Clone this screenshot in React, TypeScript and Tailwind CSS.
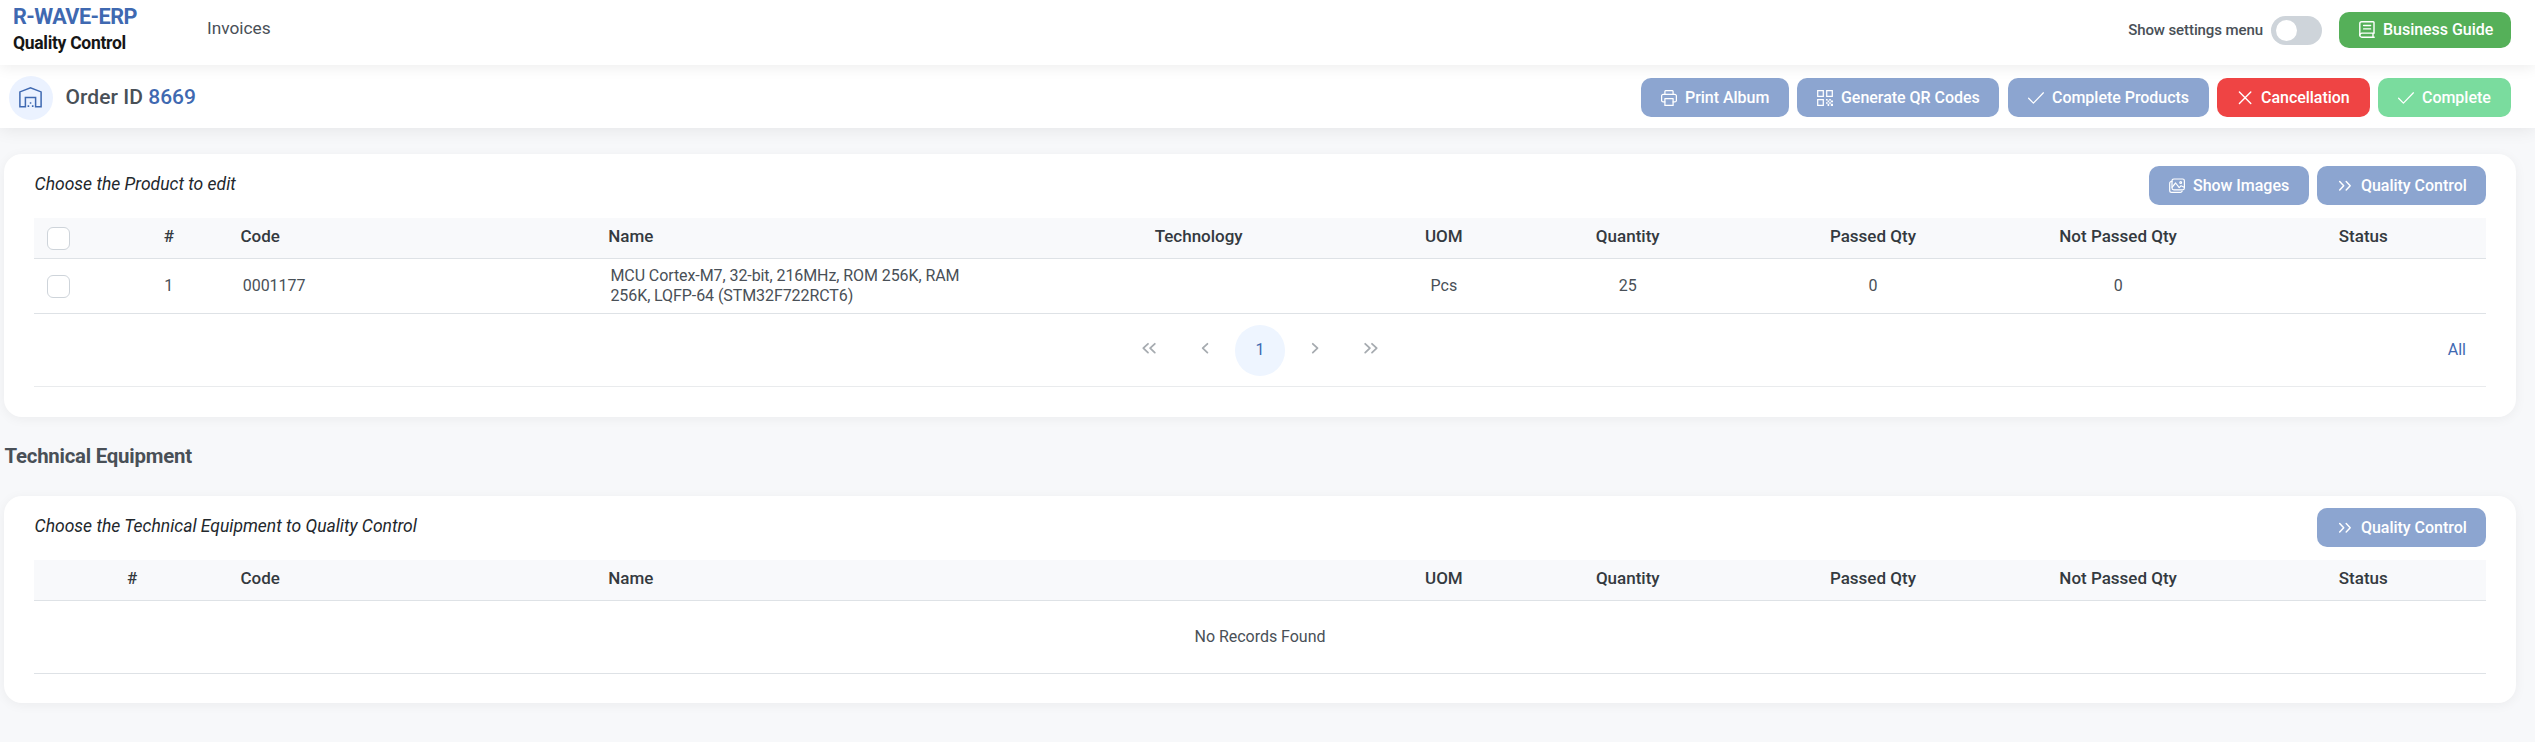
import type { ReactNode } from "react";

const iconProps = {
  width: 16,
  height: 16,
  viewBox: "0 0 16 16",
  fill: "none",
  stroke: "currentColor",
  strokeWidth: 1.25,
  strokeLinecap: "round" as const,
  strokeLinejoin: "round" as const,
  className: "shrink-0",
};

const PrintIcon = () => (
  <svg {...iconProps}>
    <path d="M3.9 4.4V1.6a1 1 0 0 1 1-1h6.2a1 1 0 0 1 1 1v2.8" />
    <path d="M3.9 11.9H2.2A1.6 1.6 0 0 1 .6 10.3V6a1.6 1.6 0 0 1 1.6-1.6h11.6A1.6 1.6 0 0 1 15.4 6v4.3a1.6 1.6 0 0 1-1.6 1.6h-1.7" />
    <path d="M3.9 8.6h8.2v6.8H3.9z" />
  </svg>
);

const QrIcon = () => (
  <svg {...iconProps} strokeLinecap="butt" strokeLinejoin="miter">
    <path d="M.7.7h5.6v5.6H.7zM9.7.7h5.6v5.6H9.7zM.7 9.7h5.6v5.6H.7z" />
    <path
      d="M9 9h1.6v1.6H9zM12.2 9h1.6v1.6h-1.6zM10.6 10.6h1.6v1.6h-1.6zM13.8 10.6h2.2v1.6h-2.2zM9 12.2h1.6v1.6H9zM12.2 12.2h1.6v1.6h-1.6zM10.6 13.8h1.6V16h-1.6zM13.8 13.8H16V16h-2.2z"
      fill="currentColor"
      stroke="none"
    />
  </svg>
);

const CheckIcon = () => (
  <svg {...iconProps}>
    <path d="M.6 8.2l4.8 4.9L15.4 2.8" />
  </svg>
);

const TimesIcon = () => (
  <svg {...iconProps} strokeWidth={1.4}>
    <path d="M2.4 2.1l11.4 11.4M13.8 2.1L2.4 13.5" />
  </svg>
);

const ImagesIcon = () => (
  <svg {...iconProps} strokeWidth={1.2}>
    <rect x="3" y="1" width="12.4" height="10.8" rx="1.8" />
    <path d="M2.9 3.4A2 2 0 0 0 .7 5.4v7a1.9 1.9 0 0 0 1.9 1.9h8.8a1.8 1.8 0 0 0 1.7-1.1" />
    <path d="M3.2 9.2l3.4-4.2 3.6 4.6 1.9-1.8 3.1 1.5" />
    <circle cx="11.7" cy="4.6" r=".9" />
  </svg>
);

const DoubleRightIcon = () => (
  <svg {...iconProps} strokeWidth={1.5}>
    <path d="M2.7 3.6l4 4.2-4 4.2M9.2 3.6l4 4.2-4 4.2" />
  </svg>
);

const BookIcon = () => (
  <svg {...iconProps} height={17} viewBox="0 0 16 17" strokeWidth={1.4} className="mb-px shrink-0">
    <path d="M15 12.1V1.4a.7.7 0 0 0-.7-.7H2.7A1.9 1.9 0 0 0 .8 2.6v11.6a2 2 0 0 0 2 2h12.4" />
    <path d="M15 12.1H2.8a2 2 0 0 0-2 2M14 12.3v3.8M4.6 4.5h7M4.6 7.9h7" />
  </svg>
);

const WarehouseIcon = () => (
  <svg width="23" height="21" viewBox="0 0 23 21" fill="none" stroke="currentColor" strokeWidth="1.5">
    <path d="M.9 19.7V4.9L11.5.9l10.6 4v14.8h-5.5v-9.3H6.4v9.3z" />
    <path
      d="M8.6 18.3h1.6v1.8H8.6zM12.9 18.3h1.6v1.8h-1.6zM10.8 15.2h1.5v1.6h-1.5z"
      fill="currentColor"
      stroke="none"
    />
  </svg>
);

const blue = "bg-[#8ca5d0]";

function Button({ icon, label, color, size }: { icon: ReactNode; label: string; color: string; size: string }) {
  return (
    <button className={`flex shrink-0 items-center gap-2 rounded-[10px] pl-5 text-base font-medium tracking-[-0.03px] whitespace-nowrap text-white ${color} ${size}`}>
      {icon}
      <span>{label}</span>
    </button>
  );
}

const Checkbox = () => <div className="h-[23px] w-[23px] rounded-[6px] border border-[#ced4da] bg-white" />;

const productCols = "grid grid-cols-[3%_5%_15%_17%_15%_5%_10%_10%_10%_10%]";
const equipmentCols = "grid grid-cols-[8%_15%_32%_5%_10%_10%_10%_10%]";

function HeadCell({ children, left }: { children?: ReactNode; left?: boolean }) {
  return <div className={left ? "pb-[3px] pl-[10.3px]" : "pb-[3px] text-center"}>{children}</div>;
}

function TableHead({ cols, children }: { cols: string; children: ReactNode }) {
  return (
    <div className={`${cols} h-[41px] items-center border-b border-[#dee2e6] bg-[#f8f9fb] text-[17px] font-medium text-[#343a40]`}>
      {children}
    </div>
  );
}

function PageArrow({ d }: { d: string }) {
  return (
    <button className="flex h-[50px] w-[50px] items-center justify-center pb-[3px]">
      <svg width="16" height="16" viewBox="0 0 16 16" fill="none" stroke="#a6abb0" strokeWidth="1.8" strokeLinecap="round" strokeLinejoin="round">
        <path d={d} />
      </svg>
    </button>
  );
}

const caption = "pb-[3px] pl-[0.6px] text-[17.5px] font-[450] text-[#23282d] italic";
const card = "ml-1 w-[2512px] rounded-[18px] bg-white px-[30px] pt-3 shadow-[0_2px_12px_rgba(0,0,0,0.05)]";

export default function App() {
  return (
    <div className="h-[742px] w-full overflow-hidden bg-[#f7f8fa] font-['Roboto',sans-serif] text-[#495057]">
      <header className="relative z-20 flex h-[65px] bg-white pr-6 pl-[13px] shadow-[0_2px_14px_rgba(0,0,0,0.08)]">
        <div className="w-[194px] pt-1">
          <div className="text-[21.6px] leading-[26px] font-bold tracking-[-0.52px] text-[#3f69b1]">R-WAVE-ERP</div>
          <div className="text-[17.5px] leading-[26px] font-bold tracking-[-0.3px] text-[#161616]">Quality Control</div>
        </div>
        <nav className="pt-4 text-[17.3px] leading-6">Invoices</nav>
        <div className="ml-auto flex h-[60px] items-center">
          <span className="text-[15px] font-medium tracking-[-0.09px]">Show settings menu</span>
          <span className="ml-2 flex h-[29px] w-[51px] items-center rounded-full bg-[#ced4da] pl-[5px]">
            <span className="h-[21px] w-[21px] rounded-full bg-white" />
          </span>
          <div className="ml-[17px]">
            <Button icon={<BookIcon />} label="Business Guide" color="bg-[#55b059]" size="h-9 w-[172px]" />
          </div>
        </div>
      </header>

      <section className="relative z-10 flex h-[63px] items-center bg-white pr-6 pl-[9px] shadow-[0_2px_16px_rgba(0,0,0,0.08)]">
        <div className="mt-[3px] flex h-11 w-11 items-center justify-center rounded-full bg-[#ebf2ff] pr-px pb-px text-[#3f69b1]">
          <WarehouseIcon />
        </div>
        <h1 className="mt-[2px] ml-[12.5px] text-[21px] font-medium tracking-[0.04px]">
          Order ID <span className="text-[#3f69b1]">8669</span>
        </h1>
        <div className="mt-[2px] ml-auto flex gap-2">
          <Button icon={<PrintIcon />} label="Print Album" color={blue} size="h-[39px] w-[148px]" />
          <Button icon={<QrIcon />} label="Generate QR Codes" color={blue} size="mr-px h-[39px] w-[202px]" />
          <Button icon={<CheckIcon />} label="Complete Products" color={blue} size="h-[39px] w-[201px]" />
          <Button icon={<TimesIcon />} label="Cancellation" color="bg-[#ef4444]" size="h-[39px] w-[153px]" />
          <Button icon={<CheckIcon />} label="Complete" color="bg-[#7adc9e]" size="h-[39px] w-[133px]" />
        </div>
      </section>

      <section className={`${card} mt-[26px] h-[263px]`}>
        <div className="flex h-[39px] items-center justify-between">
          <h2 className={caption}>Choose the Product to edit</h2>
          <div className="flex gap-2">
            <Button icon={<ImagesIcon />} label="Show Images" color={blue} size="h-[39px] w-[160px]" />
            <Button icon={<DoubleRightIcon />} label="Quality Control" color={blue} size="h-[39px] w-[169px]" />
          </div>
        </div>
        <div className="mt-[13px]">
          <TableHead cols={productCols}>
            <div className="pl-[13px]"><Checkbox /></div>
            <HeadCell>#</HeadCell>
            <HeadCell left>Code</HeadCell>
            <HeadCell left>Name</HeadCell>
            <HeadCell>Technology</HeadCell>
            <HeadCell>UOM</HeadCell>
            <HeadCell>Quantity</HeadCell>
            <HeadCell>Passed Qty</HeadCell>
            <HeadCell>Not Passed Qty</HeadCell>
            <HeadCell>Status</HeadCell>
          </TableHead>
          <div className={`${productCols} h-[55px] items-center border-b border-[#dee2e6] text-base leading-5`}>
            <div className="pl-[13px]"><Checkbox /></div>
            <div className="text-center">1</div>
            <div className="pl-[12.5px]">0001177</div>
            <div className="pl-[12.5px] tracking-[-0.08px]">
              MCU Cortex-M7, 32-bit, 216MHz, ROM 256K, RAM
              <br />
              256K, LQFP-64 (STM32F722RCT6)
            </div>
            <div />
            <div className="text-center">Pcs</div>
            <div className="text-center">25</div>
            <div className="text-center">0</div>
            <div className="text-center">0</div>
            <div />
          </div>
          <div className="grid h-[73px] grid-cols-[1fr_auto_1fr] items-center border-b border-[#e9ebed] text-base">
            <div />
            <div className="flex gap-[5.3px]">
              <PageArrow d="M7 3.8L2.3 8.2 7 12.6M13.8 3.8L9.1 8.2l4.7 4.4" />
              <PageArrow d="M10.4 3.8L5.7 8.2l4.7 4.4" />
              <button className="h-[51px] w-[50px] rounded-full bg-[#eef5ff] pb-px text-[#3f69b1]">1</button>
              <PageArrow d="M5.8 3.8l4.7 4.4-4.7 4.4" />
              <PageArrow d="M2.2 3.8l4.7 4.4-4.7 4.4M9 3.8l4.7 4.4L9 12.6" />
            </div>
            <div className="pr-5 text-right text-[#3f69b1]">All</div>
          </div>
        </div>
      </section>

      <h2 className="mt-[26px] ml-[4.5px] h-[53px] text-[20.4px] leading-[26px] font-bold tracking-[-0.23px]">Technical Equipment</h2>

      <section className={`${card} h-[207px]`}>
        <div className="flex h-[39px] items-center justify-between">
          <h2 className={caption}>Choose the Technical Equipment to Quality Control</h2>
          <Button icon={<DoubleRightIcon />} label="Quality Control" color={blue} size="h-[39px] w-[169px]" />
        </div>
        <div className="mt-[13px]">
          <TableHead cols={equipmentCols}>
            <HeadCell>#</HeadCell>
            <HeadCell left>Code</HeadCell>
            <HeadCell left>Name</HeadCell>
            <HeadCell>UOM</HeadCell>
            <HeadCell>Quantity</HeadCell>
            <HeadCell>Passed Qty</HeadCell>
            <HeadCell>Not Passed Qty</HeadCell>
            <HeadCell>Status</HeadCell>
          </TableHead>
          <div className="flex h-[73px] items-center justify-center border-b border-[#dee2e6] text-base tracking-[-0.03px]">No Records Found</div>
        </div>
      </section>
    </div>
  );
}
